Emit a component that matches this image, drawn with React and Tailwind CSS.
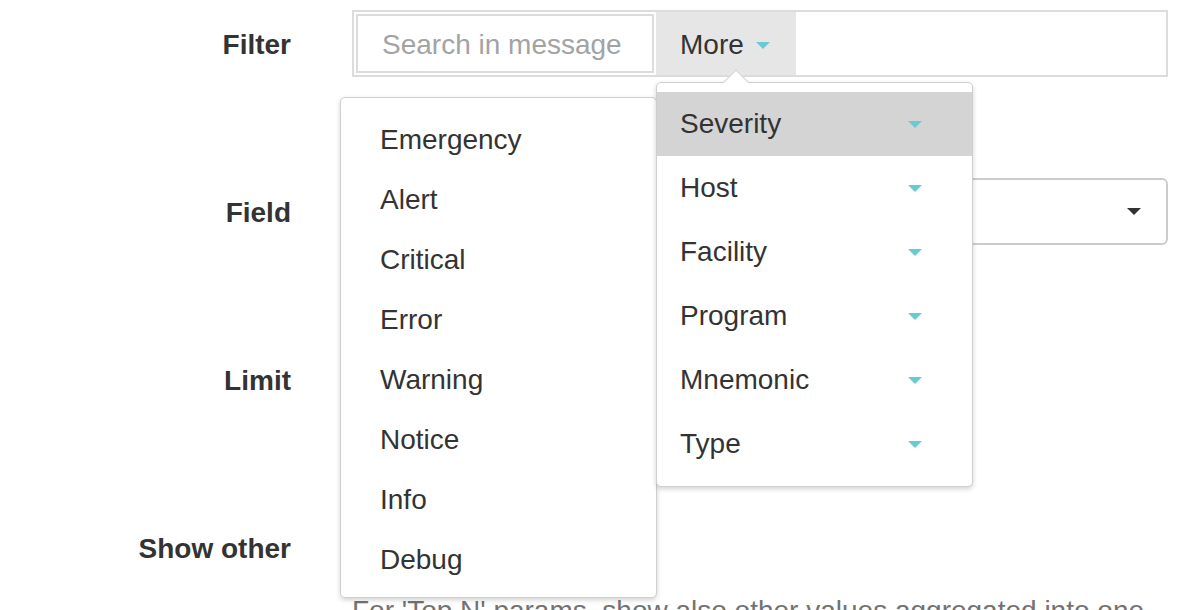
import React from "react";

// ── Small triangle caret ─────────────────────────────────────────────────────
const Caret = ({ className = "" }) => (
  <svg width="14" height="7" viewBox="0 0 14 7" className={className}>
    <path d="M0 0 L14 0 L7 7 Z" fill="currentColor" />
  </svg>
);

const SEVERITIES = [
  "Emergency", "Alert", "Critical", "Error",
  "Warning", "Notice", "Info", "Debug",
];

const FIELDS = ["Severity", "Host", "Facility", "Program", "Mnemonic", "Type"];

const Row = ({ label, children }) => (
  <div className="flex items-center h-[67px]">
    <div className="w-[291px] text-right font-bold text-[28px] text-[#333] pt-[3px]">{label}</div>
    <div className="ml-[61px] flex-1 h-full flex items-center">{children}</div>
  </div>
);

export default function App() {
  return (
    <div
      className="relative w-[1200px] h-[610px] overflow-hidden bg-white text-[#333]"
      style={{ fontFamily: '"Liberation Sans", Arial, sans-serif' }}
    >
      {/* Form */}
      <div className="pt-[10px] pr-[32px] flex flex-col gap-[101px]">
        <Row label="Filter">
          <div className="w-full h-full flex border-2 border-[#dcdcdc]">
            <div className="w-[298px] m-[2px] border-2 border-[#dcdcdc] flex items-center pl-[24px] pt-[2px] text-[28px] text-[#a3a3a3]">
              Search in message
            </div>
            <div className="w-[140px] h-full bg-[#e6e6e6] flex items-center pl-[24px] pt-[2px] text-[28px] text-[#333]">
              More
              <Caret className="ml-[12px] mt-[1px] text-[#67cbd5]" />
            </div>
          </div>
        </Row>

        <Row label="Field">
          <div className="w-full h-full border-2 border-[#cccccc] rounded-[6px] flex items-center justify-end pr-[25px]">
            <Caret className="text-[#333]" />
          </div>
        </Row>

        <Row label="Limit">
          <div className="w-[200px] h-full border-2 border-[#cccccc] rounded-[6px]" />
        </Row>

        <div>
          <Row label="Show other">
            <div className="w-[20px] h-[20px] border-2 border-[#999] rounded-[3px]" />
          </Row>
          <p className="ml-[352px] mt-[11px] text-[28px] leading-[38px] text-[#737373] whitespace-nowrap">
            For 'Top N' params, show also other values aggregated into one
          </p>
        </div>
      </div>

      {/* Severity sub-menu */}
      <div className="absolute left-[340px] top-[97px] w-[317px] h-[501px] bg-white border border-[#cfcfcf] rounded-[5px] shadow-[0_2px_5px_rgba(0,0,0,0.18)] pt-[12px]">
        {SEVERITIES.map((s) => (
          <div key={s} className="h-[60px] flex items-center pl-[39px] text-[28px] text-[#333]">
            {s}
          </div>
        ))}
      </div>

      {/* More menu */}
      <div className="absolute left-[656px] top-[82px] w-[317px] h-[405px] bg-white border border-[#cfcfcf] rounded-[5px] shadow-[0_2px_5px_rgba(0,0,0,0.18)] pt-[9px]">
        <div className="absolute left-[70px] -top-[10px] w-[18px] h-[18px] bg-white border-t border-l border-[#cfcfcf] rotate-45" />
        {FIELDS.map((f, i) => (
          <div
            key={f}
            className={`relative h-[64px] flex items-center justify-between pl-[23px] pr-[50px] text-[28px] text-[#333] ${
              i === 0 ? "bg-[#d4d4d4]" : ""
            }`}
          >
            {f}
            <Caret className="text-[#67cbd5]" />
          </div>
        ))}
      </div>
    </div>
  );
}
